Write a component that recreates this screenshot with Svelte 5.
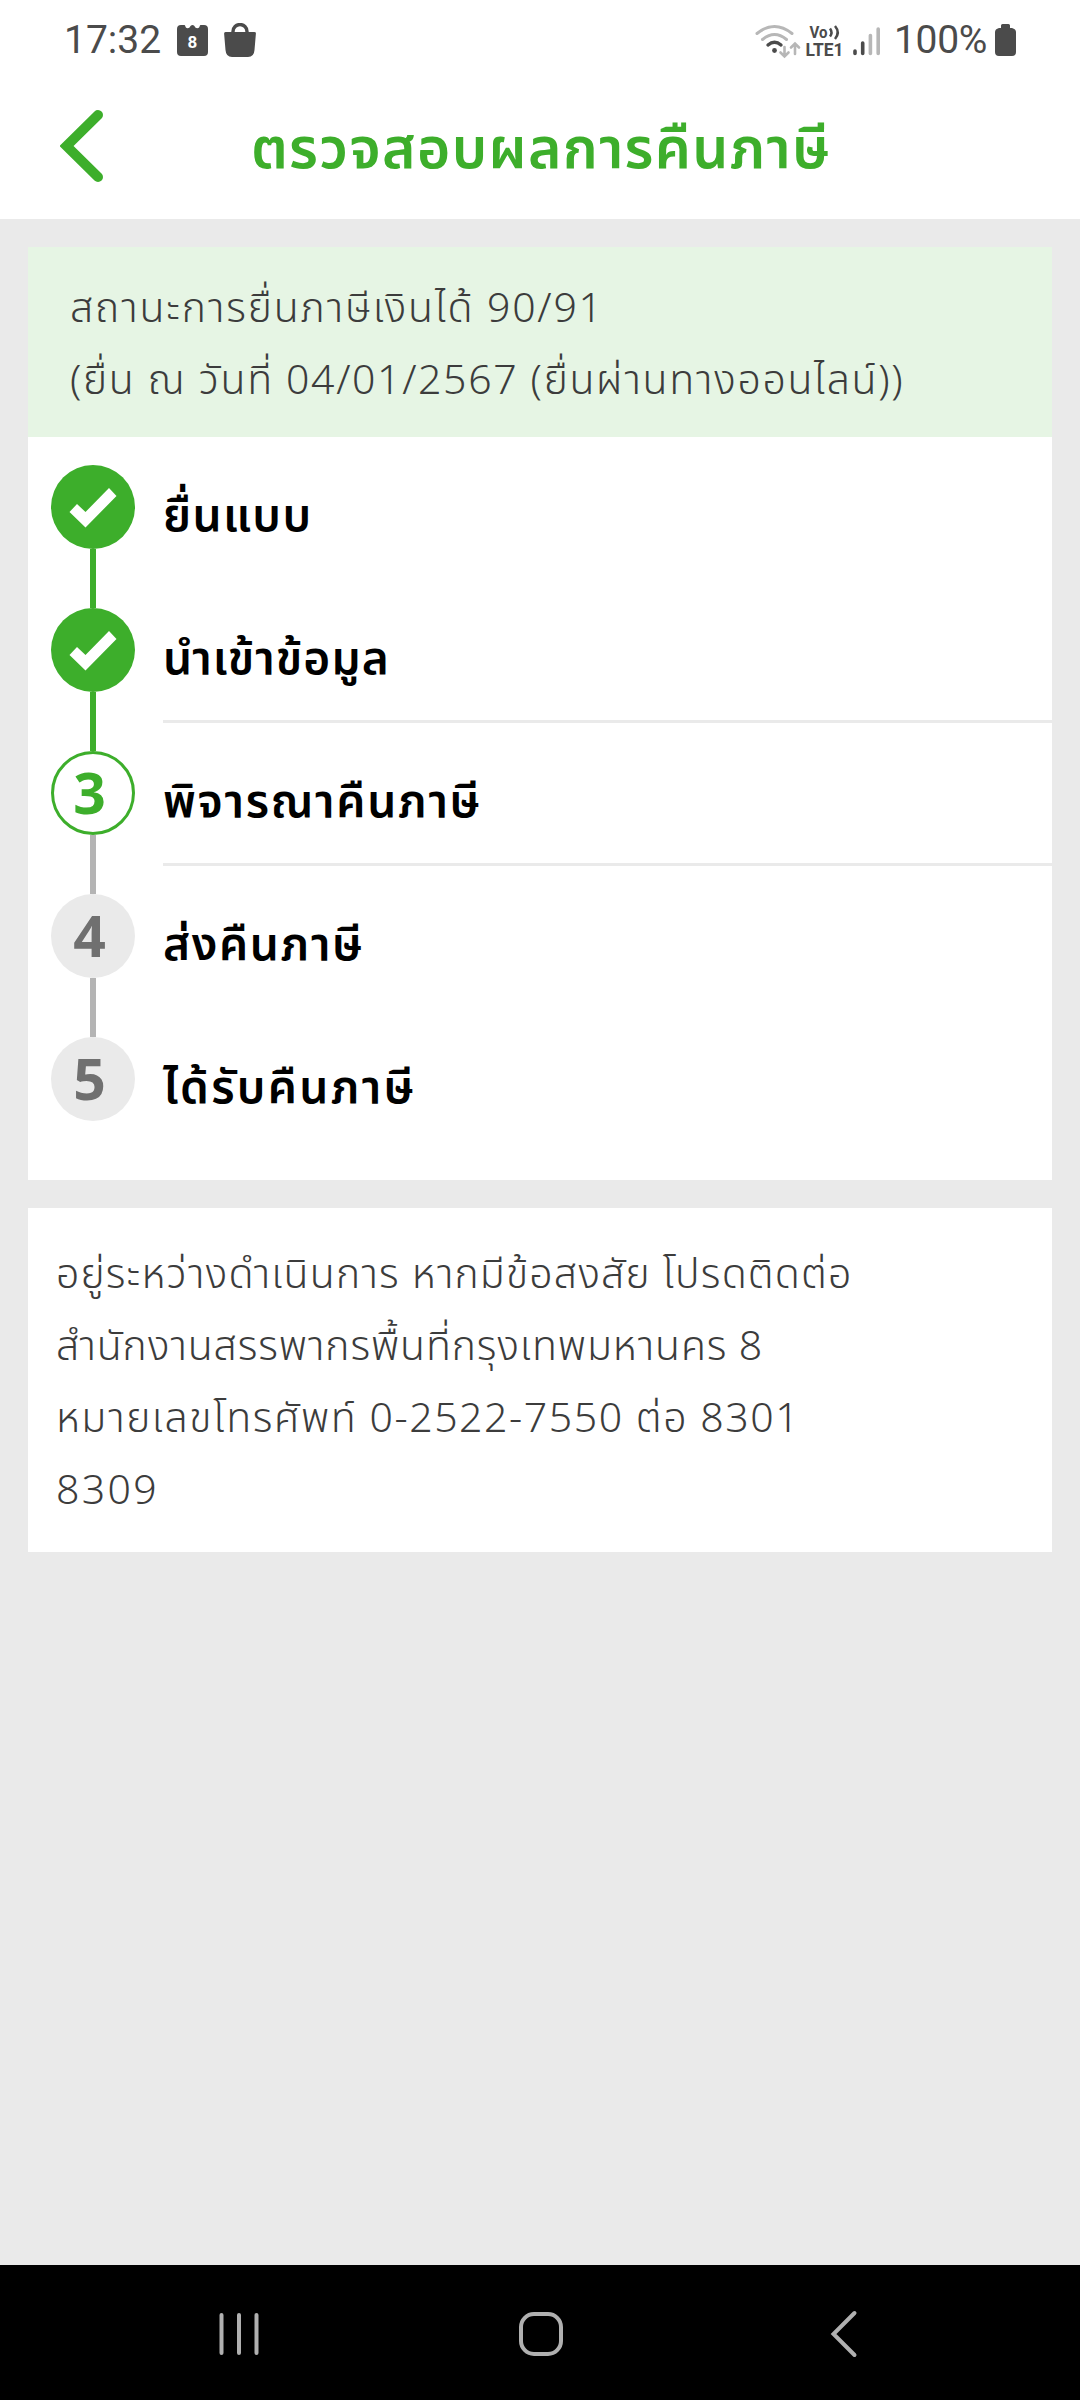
<script lang="ts">
    interface Step {
        label: string;
        state: 'done' | 'current' | 'pending';
        divider?: boolean;
        spacing: number;
    }

    interface Line {
        text: string;
        spacing: number;
    }

    const title = 'ตรวจสอบผลการคืนภาษี';

    const summary: Line[] = [
        {text: 'สถานะการยื่นภาษีเงินได้ 90/91', spacing: 1.8},
        {text: '(ยื่น ณ วันที่ 04/01/2567 (ยื่นผ่านทางออนไลน์))', spacing: 1.65},
    ];

    const steps: Step[] = [
        {label: 'ยื่นแบบ', state: 'done', spacing: 1.4},
        {label: 'นำเข้าข้อมูล', state: 'done', divider: true, spacing: 1.1},
        {label: 'พิจารณาคืนภาษี', state: 'current', divider: true, spacing: 1.7},
        {label: 'ส่งคืนภาษี', state: 'pending', spacing: 1.6},
        {label: 'ได้รับคืนภาษี', state: 'pending', spacing: 2.3},
    ];

    const contact: Line[] = [
        {text: 'อยู่ระหว่างดำเนินการ หากมีข้อสงสัย โปรดติดต่อ', spacing: 1.15},
        {text: 'สำนักงานสรรพากรพื้นที่กรุงเทพมหานคร 8', spacing: 0.85},
        {text: 'หมายเลขโทรศัพท์ 0-2522-7550 ต่อ 8301', spacing: 1.55},
        {text: '8309', spacing: 2.3},
    ];
</script>

<div class="screen">
    <div class="status-bar">
        <span class="time">17:32</span>
        <svg class="calendar" width="31" height="31" viewBox="0 0 31 31">
            <path
                d="M4 0H7.500C8.500 0 8 3.200 10.700 3.200S13 0 15.500 0S17.500 3.200 20.300 3.200S22.500 0 23.500 0H27Q31 0 31 4V27Q31 31 27 31H4Q0 31 0 27V4Q0 0 4 0Z"
                fill="#4b4b4b"
            />
            <text x="15.500" y="23" text-anchor="middle" font-size="17" font-weight="700" fill="#fff">8</text>
        </svg>
        <svg class="bag" width="32" height="34" viewBox="0 0 32 34">
            <path d="M9 11V8.500a7 7 0 0 1 14 0V11" fill="none" stroke="#4b4b4b" stroke-width="3.400" />
            <path d="M1.500 9H30.500Q32 9 31.900 10.500L30.500 27Q30 34 24 34H8Q2 34 1.500 27L.1 10.500Q0 9 1.500 9Z" fill="#4b4b4b" />
        </svg>

        <svg class="wifi" width="46" height="36" viewBox="0 0 46 36" fill="none" stroke-linecap="round">
            <g stroke="#b7b7b7" stroke-width="3">
                <path d="M2 10.500Q19.500 -3.500 37 10.500" />
                <path d="M7.500 16.500Q19.500 6.500 31.500 16.500" />
                <path d="M29.500 24V33M25.500 29.500L29.500 33.500L33.500 29.500M40 31V21M36 24.500L40 20.500L44 24.500" stroke-width="2.600" />
            </g>
            <path d="M13 22Q19.500 16.500 26 22" stroke="#4b4b4b" stroke-width="3.400" />
            <circle cx="19.500" cy="27.500" r="2.400" fill="#4b4b4b" />
        </svg>
        <svg class="lte" width="40" height="42" viewBox="0 0 40 42" fill="#4b4b4b">
            <text x="4.500" y="15" font-size="17" font-weight="700" textLength="18" lengthAdjust="spacingAndGlyphs">Vo</text>
            <path d="M25 5.500Q28 9.500 25 13.500M30 3Q35.500 9.500 30 16" fill="none" stroke="#4b4b4b" stroke-width="2.500" />
            <text x="0.500" y="33" font-size="17.500" font-weight="700" textLength="38" lengthAdjust="spacingAndGlyphs">LTE1</text>
        </svg>
        <svg class="signal" width="28" height="30" viewBox="0 0 28 30" stroke-width="3.600" stroke-linecap="round">
            <path d="M2 25V27.500M9.700 17V27.500" stroke="#4b4b4b" />
            <path d="M17.400 9.500V27.500M25.200 3V27.500" stroke="#b7b7b7" />
        </svg>
        <span class="percent">100%</span>
        <svg class="battery" width="21" height="32" viewBox="0 0 21 32" fill="#4b4b4b">
            <path d="M6 4V1.500Q6 0 7.500 0H13.500Q15 0 15 1.500V4H17Q21 5 21 8V28Q21 32 17 32H4Q0 32 0 28V8Q0 5 4 4Z" />
        </svg>
    </div>

    <header>
        <svg class="back" width="44" height="74" viewBox="0 0 44 74" fill="none">
            <path d="M38 6L6.500 37L38 68" stroke="#3dae2b" stroke-width="10" stroke-linecap="round" />
        </svg>
        <h1>{title}</h1>
    </header>

    <main>
        <section class="card">
            <div class="summary">
                {#each summary as line}
                    <p style="letter-spacing: {line.spacing}px">{line.text}</p>
                {/each}
            </div>
            <ol>
                {#each steps as step, i}
                    <li class={step.state}>
                        <div class="track">
                            <div class="marker">
                                {#if step.state === 'done'}
                                    <svg width="84" height="84" viewBox="0 0 84 84">
                                        <path d="M18.500 47L26 39L34.500 47L58 23L65.500 31L34.500 62.500Z" fill="#fff" />
                                    </svg>
                                {:else}
                                    <span>{i + 1}</span>
                                {/if}
                            </div>
                            {#if i < steps.length - 1}
                                <div class="connector"></div>
                            {/if}
                        </div>
                        <div class="label" class:divider={step.divider}>
                            <span style="letter-spacing: {step.spacing}px">{step.label}</span>
                        </div>
                    </li>
                {/each}
            </ol>
        </section>

        <section class="card contact">
            {#each contact as line}
                <p style="letter-spacing: {line.spacing}px">{line.text}</p>
            {/each}
        </section>
    </main>

    <nav>
        <svg width="40" height="48" viewBox="0 0 40 48" stroke="#b0b0b0" stroke-width="4" stroke-linecap="round">
            <path d="M2.500 5V43M20 5V43M37.500 5V43" />
        </svg>
        <svg class="home" width="48" height="48" viewBox="0 0 48 48" fill="none" stroke="#b0b0b0" stroke-width="4">
            <rect x="4" y="4" width="40" height="40" rx="13" />
        </svg>
        <svg width="28" height="48" viewBox="0 0 28 48" fill="none" stroke="#b0b0b0" stroke-width="4" stroke-linecap="round">
            <path d="M24.500 3L3.500 24L24.500 45" />
        </svg>
    </nav>
</div>

<style>
    :global(body) {
        background: #eaeaea;
    }

    .screen {
        display: flex;
        flex-direction: column;
        width: 1080px;
        height: 2400px;
        overflow: hidden;
        background: #eaeaea;
        font-family: 'Noto Sans', 'Noto Sans Thai', sans-serif;
    }

    .status-bar {
        display: flex;
        box-sizing: border-box;
        height: 80px;
        padding: 0 64px;
        background: #fff;
        color: #4b4b4b;
        font-family: Roboto, sans-serif;
    }
    .status-bar svg {
        flex: none;
    }
    .time,
    .percent {
        font-size: 39px;
        line-height: 81px;
        white-space: nowrap;
    }
    .time {
        width: 113px;
    }
    .calendar {
        margin-top: 25px;
    }
    .bag {
        margin: 23px 0 0 16px;
    }
    .wifi {
        margin: 23px 0 0 auto;
    }
    .lte {
        margin: 23px 0 0 4px;
    }
    .signal {
        margin: 26px 0 0 8px;
    }
    .percent {
        width: 101px;
        margin-left: 13px;
        letter-spacing: -0.3px;
    }
    .battery {
        margin-top: 24px;
    }

    header {
        display: flex;
        align-items: center;
        box-sizing: border-box;
        height: 139px;
        padding: 0 60px 8px;
        background: #fff;
    }
    .back {
        flex: none;
    }
    h1 {
        flex: 1;
        margin: 0 42px 0 0;
        color: #3dae2b;
        font-size: 57px;
        font-weight: 600;
        letter-spacing: 1.3px;
        line-height: 80px;
        text-align: center;
        white-space: nowrap;
    }

    main {
        display: flex;
        flex: 1;
        flex-direction: column;
        gap: 28px;
        padding: 28px;
    }
    .card {
        background: #fff;
    }
    p {
        margin: 0;
        color: #3c3c3c;
        font-size: 41px;
        font-weight: 300;
        line-height: 72px;
        white-space: nowrap;
    }
    .summary {
        box-sizing: border-box;
        height: 190px;
        padding: 23px 42px;
        background: #e6f5e4;
    }

    ol {
        box-sizing: border-box;
        height: 743px;
        margin: 0;
        padding: 28px 0 0 23px;
        list-style: none;
    }
    li {
        display: flex;
        gap: 28px;
        height: 143px;
    }
    .track {
        display: flex;
        flex-direction: column;
        align-items: center;
        width: 84px;
    }
    .marker {
        box-sizing: border-box;
        width: 84px;
        height: 84px;
        border-radius: 50%;
        background: #eaeaea;
        color: #707070;
        font-family: 'Noto Sans', sans-serif;
        font-size: 57px;
        font-weight: 700;
        line-height: 82px;
        text-align: center;
    }
    .marker span {
        display: block;
        padding-right: 7px;
    }
    .done .marker {
        background: #3dae2b;
    }
    .current .marker {
        border: 3px solid #3dae2b;
        background: #fff;
        color: #3dae2b;
        line-height: 76px;
    }
    .connector {
        width: 6px;
        height: 59px;
        background: #b4b4b4;
    }
    .done .connector {
        background: #3dae2b;
    }
    .label {
        flex: 1;
        box-sizing: border-box;
        height: 115px;
        padding-top: 12px;
        color: #000;
        font-size: 46px;
        font-weight: 600;
        line-height: 72px;
        white-space: nowrap;
    }
    .divider {
        border-bottom: 3px solid #eaeaea;
    }

    .contact {
        box-sizing: border-box;
        height: 344px;
        padding: 28px;
    }

    nav {
        display: flex;
        align-items: center;
        justify-content: space-between;
        box-sizing: border-box;
        height: 135px;
        padding: 3px 222px 0 219px;
        background: #000;
    }
    .home {
        margin-right: 7px;
    }
</style>
